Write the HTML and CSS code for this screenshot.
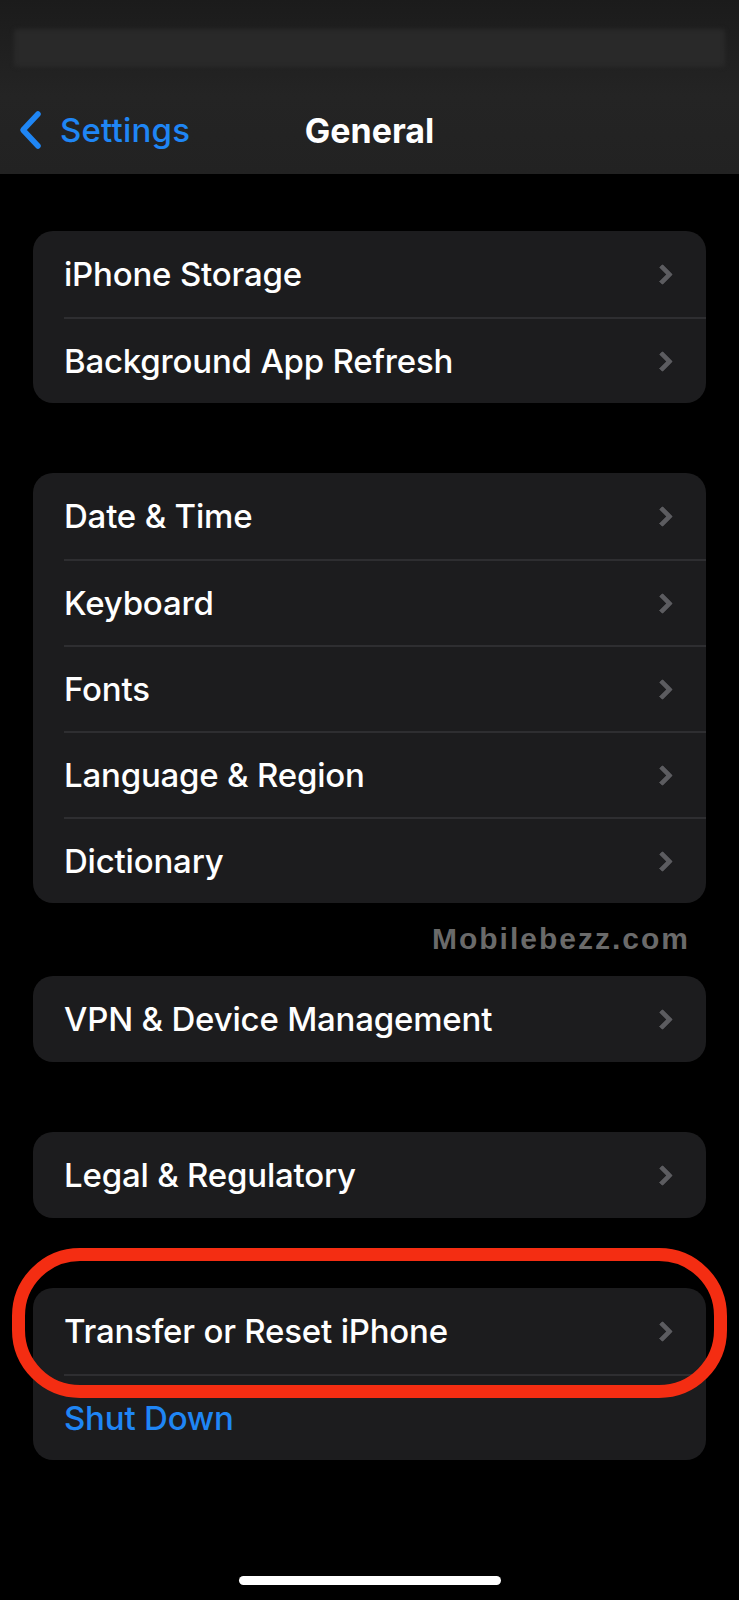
FILE: index.html
```html
<!DOCTYPE html>
<html lang="en">

<head>
  <meta charset="UTF-8">
  <meta name="viewport" content="width=device-width, initial-scale=1.0">
  <title>General</title>
  <link rel="stylesheet" href="styles.css">
</head>

<body>

  <header class="top">
    <div class="status-blur"></div>
    <nav class="nav">
      <a class="back" href="#">
        <svg width="26" height="40" viewBox="0 0 26 40">
          <path d="M21 4 L6 20 L21 36" fill="none" stroke="currentColor" stroke-width="5.5" stroke-linecap="round" stroke-linejoin="round" />
        </svg>
        <span>Settings</span>
      </a>
      <h1 class="title">General</h1>
      <span></span>
    </nav>
  </header>

  <main class="list">
    <section class="card">
      <div class="row"><span>iPhone Storage</span><i class="chev"></i></div>
      <div class="row"><span>Background App Refresh</span><i class="chev"></i></div>
    </section>

    <section class="card">
      <div class="row"><span>Date &amp; Time</span><i class="chev"></i></div>
      <div class="row"><span>Keyboard</span><i class="chev"></i></div>
      <div class="row"><span>Fonts</span><i class="chev"></i></div>
      <div class="row"><span>Language &amp; Region</span><i class="chev"></i></div>
      <div class="row"><span>Dictionary</span><i class="chev"></i></div>
      <div class="watermark">Mobilebezz.com</div>
    </section>

    <section class="card card-vpn">
      <div class="row"><span>VPN &amp; Device Management</span><i class="chev"></i></div>
    </section>

    <section class="card">
      <div class="row"><span>Legal &amp; Regulatory</span><i class="chev"></i></div>
    </section>

    <section class="card">
      <div class="row"><span>Transfer or Reset iPhone</span><i class="chev"></i></div>
      <div class="row row-blue"><span>Shut Down</span></div>
      <div class="highlight"></div>
    </section>
  </main>

  <footer class="home-bar">
    <div class="home-indicator"></div>
  </footer>

</body>

</html>
```

FILE: styles.css
```css
* {
  box-sizing: border-box;
  margin: 0;
  padding: 0;
}

body {
  width: 739px;
  height: 1600px;
  background: #000;
  color: #fff;
  font-family: Inter, "Noto Sans", sans-serif;
  overflow: hidden;
}

.top {
  height: 174px;
  padding-top: 29px;
  background: linear-gradient(180deg, #1b1b1b 0%, #242424 55%, #222 100%);
}

.status-blur {
  height: 38px;
  margin: 0 14px;
  background: #292929;
  border-radius: 4px;
  filter: blur(2px);
}

.nav {
  display: grid;
  grid-template-columns: 1fr auto 1fr;
  align-items: center;
  height: 46px;
  margin-top: 40px;
}

.back {
  display: flex;
  align-items: center;
  gap: 17px;
  padding-left: 17px;
  color: #1f86f5;
  text-decoration: none;
  font-size: 33px;
  font-weight: 500;
  letter-spacing: 0.2px;
}

.title {
  font-size: 34px;
  font-weight: 700;
}

.list {
  display: flex;
  flex-direction: column;
  gap: 70px;
  padding: 57px 33px 0;
}

.card {
  position: relative;
  background: #1c1c1e;
  border-radius: 20px;
}

.card-vpn {
  margin-top: 3px;
}

.row {
  display: flex;
  align-items: center;
  justify-content: space-between;
  height: 86px;
  margin-left: 31px;
  padding-right: 36px;
  font-size: 33px;
  font-weight: 500;
  letter-spacing: -0.2px;
}

.row + .row {
  border-top: 2px solid #2e2e31;
}

.row-blue {
  color: #1f86f5;
}

.chev {
  width: 15px;
  height: 15px;
  border-top: 5px solid #5c5c60;
  border-right: 5px solid #5c5c60;
  border-radius: 2px;
  transform: rotate(45deg);
}

.watermark {
  position: absolute;
  top: calc(100% + 21px);
  right: 16px;
  font-family: "Liberation Sans", Arial, sans-serif;
  font-size: 30px;
  line-height: 30px;
  font-weight: 700;
  letter-spacing: 2px;
  color: #6a6a6a;
}

.highlight {
  position: absolute;
  top: -40px;
  left: -21px;
  width: 715px;
  height: 150px;
  border: 13px solid #f42d12;
  border-radius: 68px;
}

.home-bar {
  display: flex;
  justify-content: center;
  padding-top: 116px;
}

.home-indicator {
  width: 262px;
  height: 9px;
  background: #fff;
  border-radius: 5px;
}
```
